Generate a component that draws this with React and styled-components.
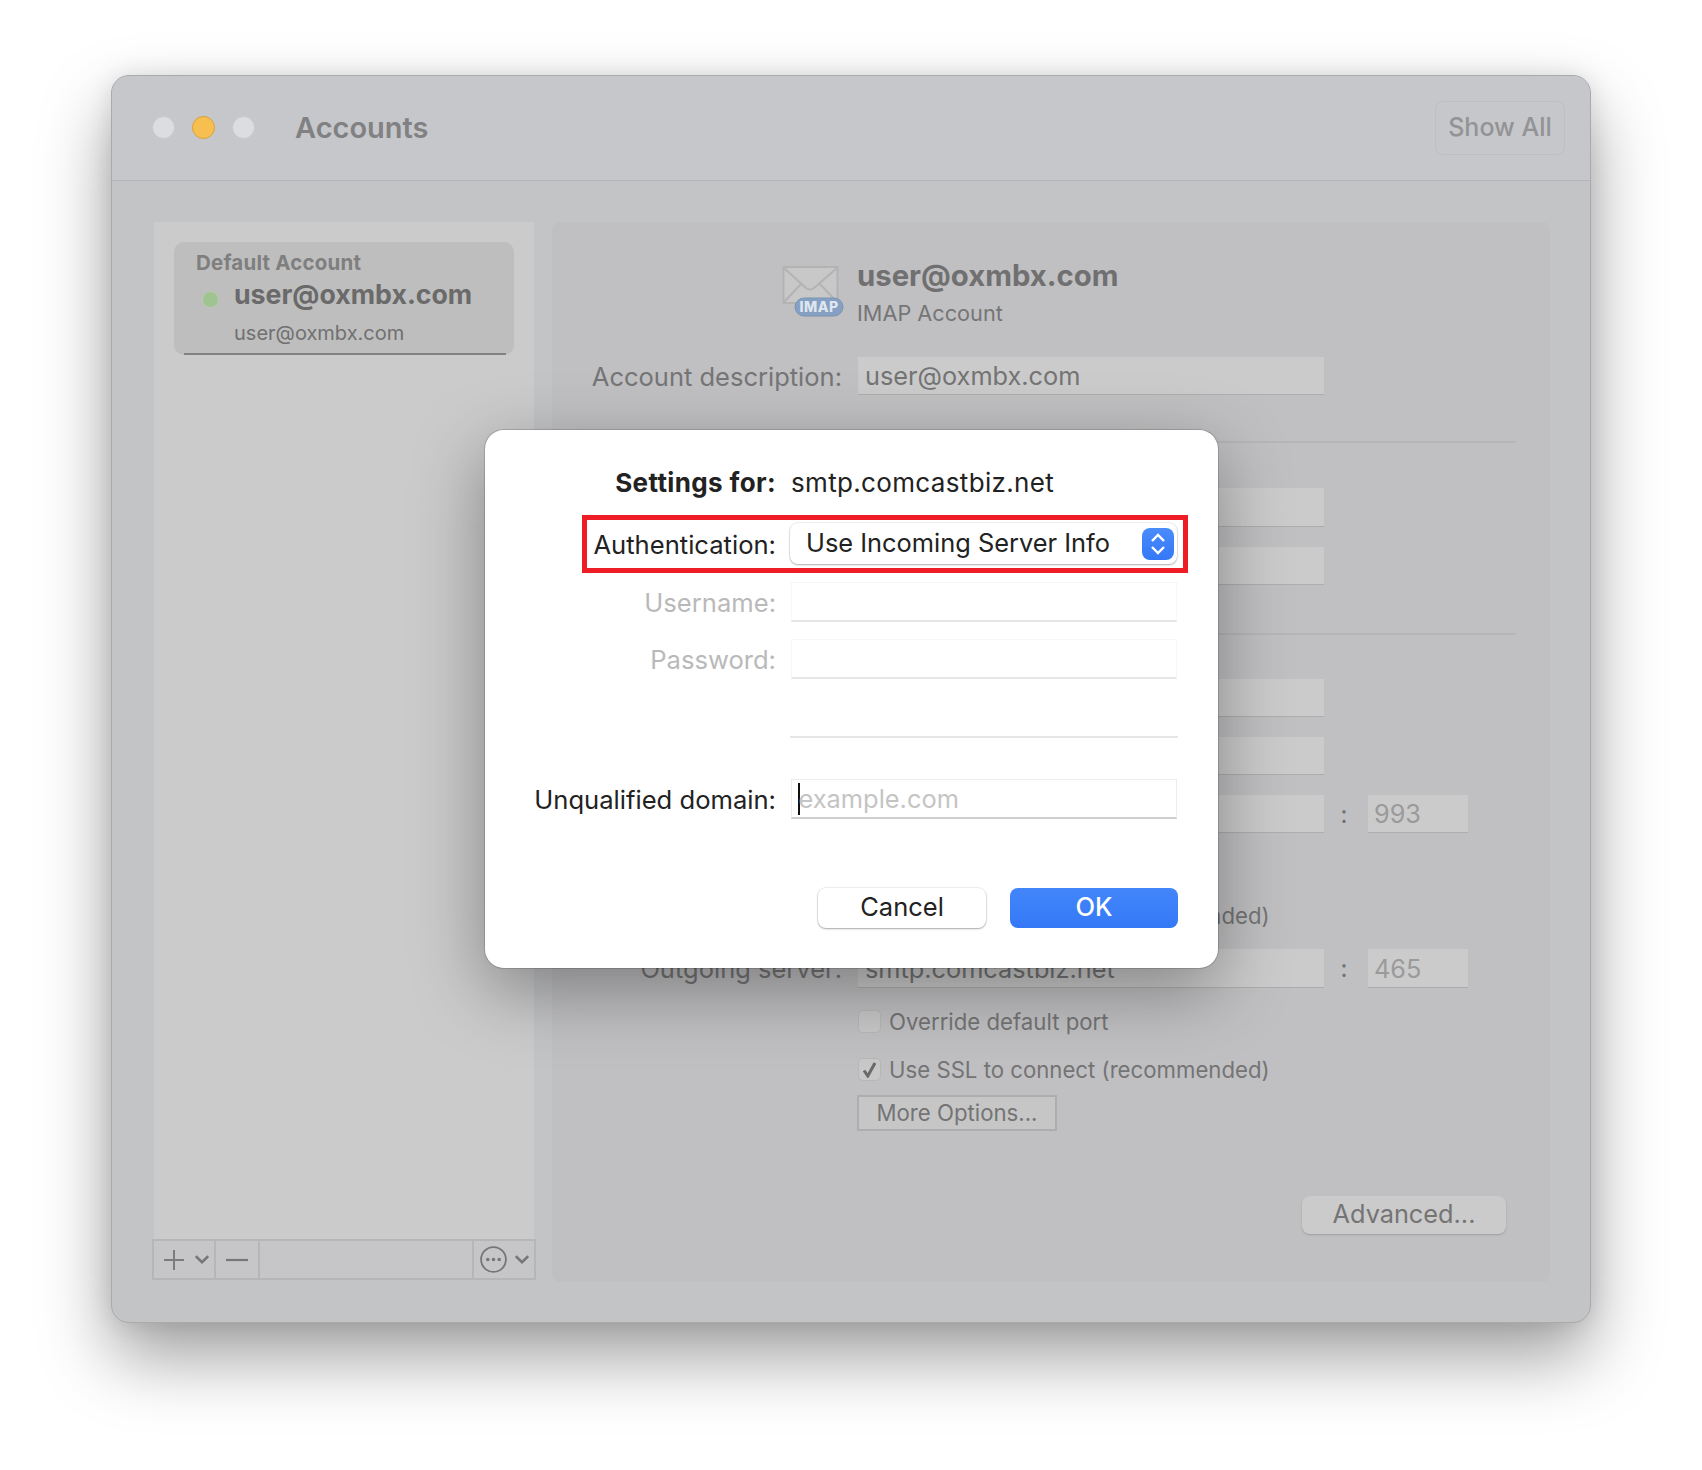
import React from 'react';
import styled, { createGlobalStyle } from 'styled-components';

const GlobalStyle = createGlobalStyle`
  html, body {
    margin: 0;
    padding: 0;
    background: #ffffff;
  }
  body {
    font-family: Inter, "Noto Sans", "Liberation Sans", sans-serif;
  }
`;

const Page = styled.div`
  width: 1702px;
  height: 1470px;
  padding: 75px 111px 0;
  box-sizing: border-box;
  overflow: hidden;
`;

const Window = styled.div`
  position: relative;
  width: 1480px;
  height: 1248px;
  box-sizing: border-box;
  border: 1px solid #a9aaac;
  border-radius: 18px;
  background: #c3c4c6;
  box-shadow: 0 34px 70px rgba(0, 0, 0, 0.38), 0 0 24px rgba(0, 0, 0, 0.1);
`;

const TitleBar = styled.header`
  display: flex;
  align-items: center;
  height: 105px;
  padding: 0 25px 1px 40px;
  box-sizing: border-box;
  background: #c6c7ca;
  border-bottom: 1px solid #b4b5b7;
  border-radius: 17px 17px 0 0;
`;

const Lights = styled.div`
  display: flex;
  gap: 17px;
  margin-right: 40px;
`;

const Light = styled.span`
  width: 23px;
  height: 23px;
  box-sizing: border-box;
  border-radius: 50%;
  background: ${(p) => (p.$active ? '#f6bf4f' : '#dcdde1')};
  border: 1px solid ${(p) => (p.$active ? '#d9a236' : '#c9cace')};
`;

const Title = styled.h1`
  flex: 1;
  margin: 0;
  padding-bottom: 1px;
  font-size: 29px;
  font-weight: 600;
  color: #818183;
`;

const ShowAll = styled.button`
  width: 130px;
  height: 54px;
  padding: 0 0 2px;
  border: 1px solid #bebfc2;
  border-radius: 8px;
  background: #c6c7ca;
  font: 500 25px Inter, sans-serif;
  color: #939395;
`;

const Body = styled.div`
  display: flex;
  gap: 16px;
  padding: 41px 40px 0;
`;

const Sidebar = styled.aside`
  display: flex;
  flex-direction: column;
  width: 384px;
`;

const AccountList = styled.div`
  height: 1017px;
  padding: 20px;
  margin: 0 2px;
  box-sizing: border-box;
  background: #cbcbcb;
`;

const AccountItem = styled.div`
  position: relative;
  height: 113px;
  padding: 9px 22px;
  box-sizing: border-box;
  border-radius: 10px;
  background: #bebebe;
  &::after {
    content: '';
    position: absolute;
    left: 10px;
    right: 8px;
    bottom: 0;
    height: 2px;
    background: #828282;
  }
`;

const DefaultLabel = styled.div`
  font-size: 20.5px;
  letter-spacing: 0.2px;
  line-height: 24px;
  font-weight: 700;
  color: #7f7f7f;
`;

const AccountName = styled.div`
  display: flex;
  align-items: center;
  height: 36px;
  margin-top: 1px;
  font-size: 26.7px;
  font-weight: 700;
  color: #6a6a6a;
`;

const StatusDot = styled.span`
  width: 17px;
  height: 17px;
  margin: 10px 15px 0 6px;
  box-sizing: border-box;
  border-radius: 50%;
  background: #9fc48f;
  border: 1px solid #bccbb5;
`;

const AccountSub = styled.div`
  margin-top: 8px;
  padding-left: 38px;
  font-size: 20px;
  line-height: 26px;
  color: #707070;
`;

const ListToolbar = styled.div`
  display: flex;
  height: 41px;
  box-sizing: border-box;
  border: 2px solid #b6b6b6;
  background: #c6c6c8;
`;

const ToolSegment = styled.div`
  display: flex;
  align-items: center;
  justify-content: center;
  gap: ${(p) => p.$gap || 0}px;
  width: ${(p) => p.$width}px;
  padding-left: ${(p) => p.$pad || 0}px;
  flex: ${(p) => (p.$grow ? 1 : 'none')};
  box-sizing: border-box;
  border-right: ${(p) => (p.$last ? 'none' : '2px solid #b6b6b6')};
`;

const Panel = styled.main`
  display: flex;
  flex-direction: column;
  width: 998px;
  height: 1060px;
  box-sizing: border-box;
  border-radius: 8px;
  background: #c0c0c2;
  padding-top: 36px;
`;

const AccountHeader = styled.div`
  display: flex;
  align-items: flex-start;
  gap: 13px;
  height: 99px;
  padding-left: 230px;
`;

const HeaderText = styled.div`
  display: flex;
  flex-direction: column;
`;

const HeaderTitle = styled.div`
  font-size: 29.3px;
  line-height: 36px;
  font-weight: 700;
  color: #707071;
`;

const HeaderSub = styled.div`
  margin-top: 4px;
  font-size: 21.7px;
  line-height: 30px;
  color: #757576;
`;

const Row = styled.div`
  display: flex;
  align-items: center;
  height: ${(p) => p.$height || 38}px;
  margin-top: ${(p) => p.$top || 0}px;
`;

const RowLabel = styled.label`
  width: 290px;
  margin-right: 16px;
  text-align: right;
  font-size: 25.5px;
  color: #757576;
  white-space: nowrap;
`;

const Field = styled.div`
  display: flex;
  align-items: center;
  width: ${(p) => p.$width || 466}px;
  height: 100%;
  padding-left: ${(p) => p.$pad || 7}px;
  box-sizing: border-box;
  background: #cbcbcb;
  border-bottom: 1px solid #adadae;
  font-size: 25.3px;
  color: ${(p) => p.$color || '#747475'};
`;

const Colon = styled.span`
  width: 44px;
  padding-right: 4px;
  box-sizing: border-box;
  text-align: center;
  font-size: 24px;
  color: #6f6f70;
`;

const Divider = styled.div`
  height: 2px;
  width: 964px;
  margin-top: ${(p) => p.$top}px;
  background: #b6b6b8;
`;

const CheckRow = styled.div`
  display: flex;
  align-items: center;
  gap: 8px;
  height: 24px;
  margin-top: ${(p) => p.$top}px;
  padding-left: 306px;
  font-size: 22.2px;
  color: #747475;
`;

const CheckBox = styled.span`
  display: flex;
  align-items: center;
  justify-content: center;
  width: 23px;
  height: 23px;
  box-sizing: border-box;
  border-radius: 5px;
  background: #c8c8c9;
  border: 1px solid #b7b7b8;
`;

const MoreOptions = styled.button`
  width: 200px;
  height: 36px;
  margin: 14px 0 0 305px;
  padding: 0 0 2px;
  box-sizing: border-box;
  border: 2px solid #adadae;
  background: #c6c6c7;
  font: 400 22.2px Inter, sans-serif;
  color: #747475;
`;

const AdvancedButton = styled.button`
  align-self: flex-end;
  width: 204px;
  height: 38px;
  margin: 65px 44px 0 0;
  padding: 0 0 3px;
  border: none;
  border-radius: 8px;
  background: #cbcbcb;
  box-shadow: 0 1px 2px rgba(0, 0, 0, 0.18);
  font: 400 25.3px Inter, sans-serif;
  color: #747475;
`;

const Dialog = styled.div`
  position: absolute;
  left: 372px;
  top: 353px;
  width: 735px;
  height: 540px;
  box-sizing: border-box;
  padding-top: 33px;
  border: 1px solid rgba(0, 0, 0, 0.15);
  border-radius: 20px;
  background: #ffffff;
  background-clip: padding-box;
  box-shadow: 0 22px 70px rgba(0, 0, 0, 0.34);
`;

const DialogRow = styled.div`
  display: flex;
  align-items: center;
  height: ${(p) => p.$height || 40}px;
  margin-top: ${(p) => p.$top || 0}px;
`;

const DialogLabel = styled.label`
  width: 291px;
  margin-right: 15px;
  padding-top: 1px;
  text-align: right;
  font-size: ${(p) => (p.$bold ? 26 : 25.6)}px;
  letter-spacing: ${(p) => (p.$bold ? 0.37 : 0)}px;
  font-weight: ${(p) => (p.$bold ? 700 : 400)};
  color: ${(p) => (p.$muted ? '#b9b9b9' : '#222222')};
  white-space: nowrap;
`;

const DialogValue = styled.span`
  font-size: 26px;
  letter-spacing: 0.34px;
  color: #222222;
`;

const Highlight = styled.div`
  position: relative;
  &::before {
    content: '';
    position: absolute;
    left: 97px;
    right: 30px;
    top: -8px;
    bottom: -9px;
    border: 5px solid #ee1c25;
    pointer-events: none;
  }
`;

const SelectBox = styled.div`
  display: flex;
  align-items: center;
  justify-content: space-between;
  width: 387px;
  height: 41px;
  padding: 0 3px 2px 16px;
  margin-left: -1px;
  box-sizing: border-box;
  border-radius: 8px;
  background: #ffffff;
  box-shadow: 0 0 0 1px rgba(0, 0, 0, 0.06), 0 1px 2px rgba(0, 0, 0, 0.28);
  font-size: 25.4px;
  color: #222222;
`;

const Stepper = styled.span`
  display: flex;
  align-items: center;
  justify-content: center;
  width: 32px;
  height: 32px;
  margin-top: 2px;
  border-radius: 8px;
  background: linear-gradient(#4a8cfb, #3478f6);
`;

const TextField = styled.div`
  display: flex;
  align-items: center;
  width: 386px;
  height: 100%;
  box-sizing: border-box;
  padding-left: ${(p) => (p.$focused ? 6 : 0)}px;
  border: 1px solid ${(p) => (p.$focused ? '#ececec' : '#f7f7f7')};
  border-bottom: 2px solid ${(p) => (p.$focused ? '#cfcfcf' : '#e6e6e6')};
`;

const Caret = styled.span`
  width: 2px;
  height: 32px;
  background: #111111;
`;

const Placeholder = styled.span`
  margin-left: -1.5px;
  font-size: 25.4px;
  color: #c4c4c4;
`;

const EmptyLine = styled.div`
  width: 388px;
  height: 2px;
  margin: 57px 0 0 305px;
  background: #e6e6e6;
`;

const DialogActions = styled.div`
  display: flex;
  justify-content: flex-end;
  gap: 24px;
  margin-top: 69px;
  padding-right: 40px;
`;

const CancelButton = styled.button`
  width: 168px;
  height: 40px;
  padding: 0 0 4px;
  border: none;
  border-radius: 8px;
  background: #ffffff;
  box-shadow: 0 0 0 1px rgba(0, 0, 0, 0.06), 0 1px 2px rgba(0, 0, 0, 0.3);
  font: 400 25.5px Inter, sans-serif;
  color: #222222;
`;

const OkButton = styled.button`
  width: 168px;
  height: 40px;
  padding: 0 0 4px;
  border: none;
  border-radius: 8px;
  background: linear-gradient(#4386fb, #3478f6);
  font: 500 25.5px Inter, sans-serif;
  color: #ffffff;
`;

const Chevron = ({ color = '#767676' }) => (
  <svg width="14" height="9" viewBox="0 0 14 9" fill="none">
    <path d="M0.8 1.2 7 7.2l6.2-6" stroke={color} strokeWidth="2.6" />
  </svg>
);

const PlusIcon = () => (
  <svg width="22" height="22" viewBox="0 0 22 22" fill="none">
    <path d="M11 1v20M1 11h20" stroke="#7b7b7b" strokeWidth="2" />
  </svg>
);

const MinusIcon = () => (
  <svg width="22" height="4" viewBox="0 0 22 4" fill="none">
    <path d="M0 2h22" stroke="#767676" strokeWidth="2.2" />
  </svg>
);

const MoreIcon = () => (
  <svg width="27" height="27" viewBox="0 0 27 27" fill="none">
    <circle cx="13.5" cy="13.5" r="12.4" stroke="#767676" strokeWidth="1.8" />
    <circle cx="7.8" cy="13.5" r="1.8" fill="#767676" />
    <circle cx="13.5" cy="13.5" r="1.8" fill="#767676" />
    <circle cx="19.2" cy="13.5" r="1.8" fill="#767676" />
  </svg>
);

const StepperIcon = () => (
  <svg width="18" height="24" viewBox="0 0 18 24" fill="none">
    <path d="M3 9l6-6 6 6M3 15l6 6 6-6" stroke="#ffffff" strokeWidth="2.4" />
  </svg>
);

const CheckMark = () => (
  <svg width="15" height="17" viewBox="0 0 15 17" fill="none">
    <path d="M2 9.5 5.8 15 13 2" stroke="#69696a" strokeWidth="3" />
  </svg>
);

const MailIcon = () => (
  <svg width="62" height="56" viewBox="0 0 62 56" style={{ marginTop: 4, flex: 'none' }}>
    <rect x="1.5" y="5" width="54" height="36" fill="#c8c8c9" stroke="#b3b3b4" strokeWidth="2" />
    <path d="M2 6l22 20q4 3 8 0L55 6M2 40l18-19M55 40 37 21" fill="none" stroke="#b3b3b4" strokeWidth="2" />
    <rect x="13" y="36" width="48" height="18" rx="9" fill="#85a0c2" stroke="#7d94b0" />
    <text x="37" y="50" textAnchor="middle" letterSpacing="0.5" fontFamily="Inter, sans-serif" fontSize="14" fontWeight="800" fill="#dfe6ef">IMAP</text>
  </svg>
);

const App = () => {
  return (
    <Page>
      <GlobalStyle />
      <Window>
        <TitleBar>
          <Lights>
            <Light />
            <Light $active />
            <Light />
          </Lights>
          <Title>Accounts</Title>
          <ShowAll>Show All</ShowAll>
        </TitleBar>
        <Body>
          <Sidebar>
            <AccountList>
              <AccountItem>
                <DefaultLabel>Default Account</DefaultLabel>
                <AccountName>
                  <StatusDot />
                  user@oxmbx.com
                </AccountName>
                <AccountSub>user@oxmbx.com</AccountSub>
              </AccountItem>
            </AccountList>
            <ListToolbar>
              <ToolSegment $width={62} $gap={10} $pad={3}>
                <PlusIcon />
                <Chevron />
              </ToolSegment>
              <ToolSegment $width={44}>
                <MinusIcon />
              </ToolSegment>
              <ToolSegment $grow />
              <ToolSegment $width={60} $gap={8} $last>
                <MoreIcon />
                <Chevron />
              </ToolSegment>
            </ListToolbar>
          </Sidebar>
          <Panel>
            <AccountHeader>
              <MailIcon />
              <HeaderText>
                <HeaderTitle>user@oxmbx.com</HeaderTitle>
                <HeaderSub>IMAP Account</HeaderSub>
              </HeaderText>
            </AccountHeader>
            <Row>
              <RowLabel>Account description:</RowLabel>
              <Field>user@oxmbx.com</Field>
            </Row>
            <Divider $top={46} />
            <Row $top={45} $height={39}>
              <RowLabel />
              <Field />
            </Row>
            <Row $top={20}>
              <RowLabel />
              <Field />
            </Row>
            <Divider $top={48} />
            <Row $top={44}>
              <RowLabel />
              <Field />
            </Row>
            <Row $top={20}>
              <RowLabel />
              <Field />
            </Row>
            <Row $top={20}>
              <RowLabel />
              <Field />
              <Colon>:</Colon>
              <Field $width={100} $pad={6} $color="#9a9a9b">993</Field>
            </Row>
            <CheckRow $top={70}>
              <CheckBox>
                <CheckMark />
              </CheckBox>
              Use SSL to connect (recommended)
            </CheckRow>
            <Row $top={22} $height={39}>
              <RowLabel>Outgoing server:</RowLabel>
              <Field>smtp.comcastbiz.net</Field>
              <Colon>:</Colon>
              <Field $width={100} $pad={6} $color="#9a9a9b">465</Field>
            </Row>
            <CheckRow $top={21}>
              <CheckBox />
              Override default port
            </CheckRow>
            <CheckRow $top={24}>
              <CheckBox>
                <CheckMark />
              </CheckBox>
              Use SSL to connect (recommended)
            </CheckRow>
            <MoreOptions>More Options...</MoreOptions>
            <AdvancedButton>Advanced...</AdvancedButton>
          </Panel>
        </Body>
        <Dialog>
          <DialogRow $height={38}>
            <DialogLabel $bold>Settings for:</DialogLabel>
            <DialogValue>smtp.comcastbiz.net</DialogValue>
          </DialogRow>
          <Highlight>
            <DialogRow $top={22} $height={41}>
              <DialogLabel>Authentication:</DialogLabel>
              <SelectBox>
                Use Incoming Server Info
                <Stepper>
                  <StepperIcon />
                </Stepper>
              </SelectBox>
            </DialogRow>
          </Highlight>
          <DialogRow $top={18}>
            <DialogLabel $muted>Username:</DialogLabel>
            <TextField />
          </DialogRow>
          <DialogRow $top={17}>
            <DialogLabel $muted>Password:</DialogLabel>
            <TextField />
          </DialogRow>
          <EmptyLine />
          <DialogRow $top={41}>
            <DialogLabel>Unqualified domain:</DialogLabel>
            <TextField $focused>
              <Caret />
              <Placeholder>example.com</Placeholder>
            </TextField>
          </DialogRow>
          <DialogActions>
            <CancelButton>Cancel</CancelButton>
            <OkButton>OK</OkButton>
          </DialogActions>
        </Dialog>
      </Window>
    </Page>
  );
};

export default App;
